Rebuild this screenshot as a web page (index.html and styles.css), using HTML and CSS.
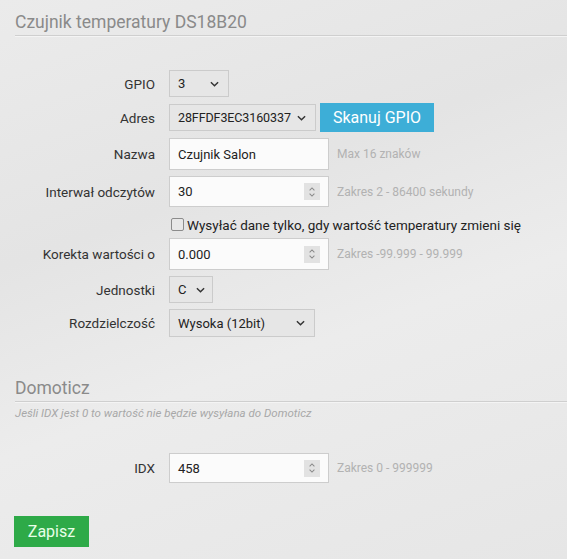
FILE: index.html
```html
<!DOCTYPE html>
<html lang="pl">
<head>
<meta charset="utf-8">
<title>Czujnik temperatury DS18B20</title>
<link rel="stylesheet" href="styles.css">
</head>
<body>
<div class="page">
  <h2 class="section-title">Czujnik temperatury DS18B20</h2>
  <div class="form">
    <div class="row r-gpio">
      <div class="label">GPIO</div>
      <div class="ctrl">
        <div class="select w-gpio"><span>3</span><svg class="chev" viewBox="0 0 10 6"><path d="M1 1l4 4 4-4"/></svg></div>
      </div>
    </div>
    <div class="row r-adres">
      <div class="label">Adres</div>
      <div class="ctrl">
        <div class="select w-adres"><span>28FFDF3EC3160337</span><svg class="chev" viewBox="0 0 10 6"><path d="M1 1l4 4 4-4"/></svg></div>
        <div class="btn btn-blue">Skanuj GPIO</div>
      </div>
    </div>
    <div class="row r-nazwa">
      <div class="label">Nazwa</div>
      <div class="ctrl">
        <div class="input"><span>Czujnik Salon</span></div>
        <div class="help">Max 16 znaków</div>
      </div>
    </div>
    <div class="row r-int">
      <div class="label">Interwał odczytów</div>
      <div class="ctrl">
        <div class="input"><span>30</span><span class="spin"><svg viewBox="0 0 10 14"><path d="M2 5l3-3 3 3M2 9l3 3 3-3"/></svg></span></div>
        <div class="help">Zakres 2 - 86400 sekundy</div>
      </div>
    </div>
    <div class="row r-check">
      <div class="label"></div>
      <div class="ctrl">
        <span class="checkbox"></span><span class="check-text">Wysyłać dane tylko, gdy wartość temperatury zmieni się</span>
      </div>
    </div>
    <div class="row r-kor">
      <div class="label">Korekta wartości o</div>
      <div class="ctrl">
        <div class="input"><span>0.000</span><span class="spin"><svg viewBox="0 0 10 14"><path d="M2 5l3-3 3 3M2 9l3 3 3-3"/></svg></span></div>
        <div class="help">Zakres -99.999 - 99.999</div>
      </div>
    </div>
    <div class="row r-jedn">
      <div class="label">Jednostki</div>
      <div class="ctrl">
        <div class="select w-jedn"><span>C</span><svg class="chev" viewBox="0 0 10 6"><path d="M1 1l4 4 4-4"/></svg></div>
      </div>
    </div>
    <div class="row r-roz">
      <div class="label">Rozdzielczość</div>
      <div class="ctrl">
        <div class="select w-roz"><span>Wysoka (12bit)</span><svg class="chev" viewBox="0 0 10 6"><path d="M1 1l4 4 4-4"/></svg></div>
      </div>
    </div>
  </div>

  <h2 class="section-title domo">Domoticz</h2>
  <p class="note">Jeśli IDX jest 0 to wartość nie będzie wysyłana do Domoticz</p>
  <div class="form form-idx">
    <div class="row r-idx">
      <div class="label">IDX</div>
      <div class="ctrl">
        <div class="input"><span>458</span><span class="spin"><svg viewBox="0 0 10 14"><path d="M2 5l3-3 3 3M2 9l3 3 3-3"/></svg></span></div>
        <div class="help">Zakres 0 - 999999</div>
      </div>
    </div>
  </div>
  <div class="btn btn-green">Zapisz</div>
</div>
</body>
</html>
```

FILE: styles.css
```css
html, body {
  margin: 0;
  padding: 0;
}
body {
  width: 567px;
  height: 559px;
  overflow: hidden;
  background: linear-gradient(160deg, #ebebeb 0%, #e4e4e4 35%, #ececec 60%, #e6e6e6 100%);
  font-family: Roboto, "Open Sans", sans-serif;
  color: #333;
}
.page {
  padding: 10px 0 0 15px;
}
.section-title {
  margin: 0;
  font-weight: 400;
  font-size: 17.5px;
  line-height: 24px;
  color: #8a8a8a;
  padding-bottom: 1px;
  border-bottom: 1px solid #cfcfcf;
  box-shadow: 0 1px 0 #f4f4f4;
}
.form {
  margin-top: 34px;
  display: flex;
  flex-direction: column;
  gap: 6px;
}
.row {
  display: grid;
  grid-template-columns: 140px 1fr;
  column-gap: 14px;
  align-items: stretch;
}
.label {
  align-self: center;
  text-align: right;
  font-size: 13.5px;
  color: #333;
}
.ctrl {
  display: flex;
  align-items: center;
}
.r-gpio, .r-jedn { height: 27px; }
.r-adres { height: 29px; }
.r-nazwa, .r-kor { height: 32px; }
.r-int { height: 31px; }
.r-check { height: 19px; margin-top: 2px; margin-bottom: -2px; }
.r-roz { height: 28px; }
.r-idx { height: 30px; }

.select {
  box-sizing: border-box;
  height: 27px;
  background: #e6e6e6;
  border: 1px solid #cbcbcb;
  display: flex;
  align-items: center;
  justify-content: space-between;
  padding: 0 9px 0 8px;
  font-size: 13px;
  color: #222;
}
.w-gpio { width: 60px; }
.w-adres { width: 147px; font-size: 12.5px; letter-spacing: -0.1px; }
.w-jedn { width: 44px; padding-right: 7px; }
.w-roz { width: 146px; height: 28px; }
.chev {
  width: 9px;
  height: 6px;
  fill: none;
  stroke: #333;
  stroke-width: 1.6;
}
.btn {
  display: flex;
  align-items: center;
  justify-content: center;
  font-size: 16px;
  color: #fff;
}
.btn-blue {
  margin-left: 4px;
  width: 114px;
  height: 29px;
  background: #3daed7;
}
.input {
  box-sizing: border-box;
  width: 160px;
  align-self: stretch;
  background: #fbfbfb;
  border: 1px solid #cdcdcd;
  display: flex;
  align-items: center;
  justify-content: space-between;
  padding: 0 8px 0 8px;
  font-size: 13px;
  color: #222;
}
.spin {
  width: 16px;
  height: 17px;
  background: #e2e2e2;
  display: flex;
  align-items: center;
  justify-content: center;
}
.spin svg {
  width: 8px;
  height: 12px;
  fill: none;
  stroke: #8a8a8a;
  stroke-width: 1.3;
}
.help {
  margin-left: 8px;
  font-size: 12px;
  color: #b2b2b2;
}
.checkbox {
  box-sizing: border-box;
  width: 13px;
  height: 13px;
  margin-left: 2px;
  border: 1px solid #8c8c8c;
  border-radius: 2px;
  background: #e8e8e8;
}
.check-text {
  margin-left: 3px;
  font-size: 13.5px;
  color: #222;
}
.domo {
  margin-top: 39px;
}
.note {
  margin: 4px 0 0 0;
  font-size: 11.5px;
  font-style: italic;
  color: #a8a8a8;
}
.form-idx {
  margin-top: 33px;
}
.btn-green {
  margin-top: 33px;
  margin-left: -1px;
  width: 75px;
  height: 31px;
  background: #2eaa48;
  color: #e8ffe8;
}
```
